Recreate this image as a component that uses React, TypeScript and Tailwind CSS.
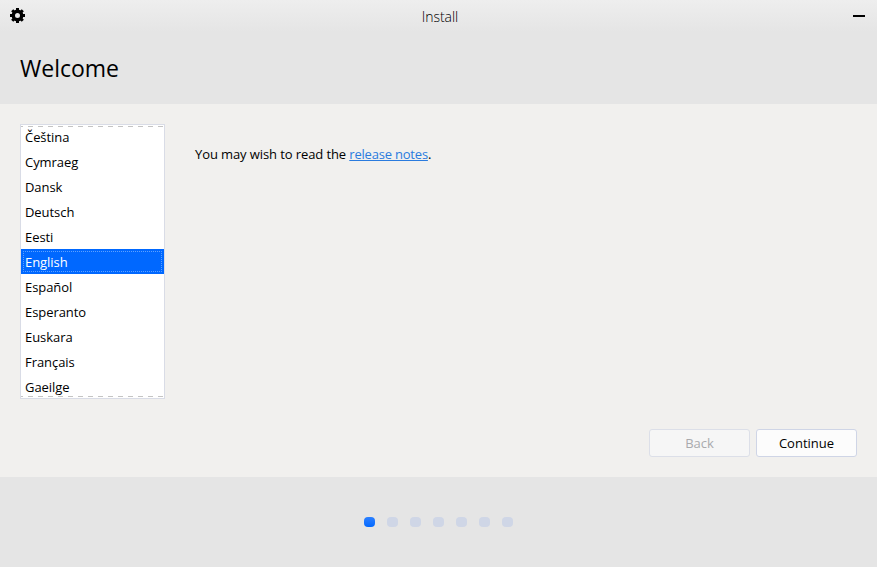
import React from "react";

const languages = ["Čeština", "Cymraeg", "Dansk", "Deutsch", "Eesti", "English", "Español", "Esperanto", "Euskara", "Français", "Gaeilge"];

function Language({ name, selected }: { name: string; selected: boolean }) {
  if (selected) {
    return (
      <li className="h-[25px] shrink-0 bg-[#0068ff] p-0.5 text-white">
        <span className="block h-[21px] rounded-[1px] border border-dotted border-[#5ea0ff] px-px leading-[21px]">{name}</span>
      </li>
    );
  }
  return <li className="h-[25px] shrink-0 px-1 leading-[27px]">{name}</li>;
}

export default function App() {
  return (
    <div className="flex h-[567px] w-[877px] flex-col overflow-hidden bg-[#f1f0ee] font-['Open_Sans',sans-serif] text-[13px] text-black">
      <header className="flex h-8 shrink-0 items-center justify-between bg-linear-to-b from-[#eeeeee] to-[#e5e5e5] pr-3 pl-[10px]">
        <svg className="mb-px" width="15" height="15" viewBox="0 0 15 15" fill="none" stroke="#000">
          <circle cx="7.5" cy="7.5" r="4.2" strokeWidth="3.4" />
          <path d="M7.5 0v3M7.5 12v3M0 7.5h3M12 7.5h3M2.2 2.2l2 2M10.8 10.8l2 2M2.2 12.8l2-2M10.8 4.2l2-2" strokeWidth="3" />
        </svg>
        <span className="pt-0.5 pl-0.5 text-sm leading-5 font-light tracking-[-0.05px]">Install</span>
        <span className="h-0.5 w-3 bg-black" />
      </header>
      <div className="flex h-[72px] shrink-0 items-center bg-[#e5e5e5] px-5">
        <h1 className="text-[23px] leading-8">Welcome</h1>
      </div>
      <main className="flex h-[373px] shrink-0 flex-col px-5 pt-5">
        <div className="flex h-[275px] gap-[30px]">
          <div className="relative w-[145px] overflow-hidden border border-[#d9dce6] bg-white">
            <ul className="-mt-px flex flex-col tracking-[-0.06px]">
              {languages.map((l) => <Language key={l} name={l} selected={l === "English"} />)}
            </ul>
            <span className="absolute inset-x-0 top-px h-px bg-[repeating-linear-gradient(90deg,#c4c4c4_0_2px,transparent_2px_7px,#c4c4c4_7px_10px)]" />
            <span className="absolute inset-x-0 bottom-px h-px bg-[repeating-linear-gradient(90deg,#c4c4c4_0_2px,transparent_2px_7px,#c4c4c4_7px_10px)]" />
          </div>
          <p className="pt-[21px] leading-[18px] tracking-[-0.1px]">You may wish to read the <a className="tracking-[-0.2px] text-[#2a7bde] underline">release notes</a>.</p>
        </div>
        <div className="mt-[30px] flex justify-end gap-1.5">
          <button className="h-7 w-[101px] rounded-[3px] border border-[#dcdfe8] bg-[#f6f6f6] pt-px text-[#a9aaad]">Back</button>
          <button className="h-7 w-[101px] rounded-[3px] border border-[#cfd5e6] bg-[#fcfcfc] pt-px">Continue</button>
        </div>
      </main>
      <footer className="flex grow items-center justify-center gap-3 bg-[#e5e5e5]">
        {[0, 1, 2, 3, 4, 5, 6].map((i) => (
          <span key={i} className={i === 0 ? "h-2.5 w-[11px] rounded bg-linear-to-b from-[#2a80ff] to-[#0068ff]" : "h-2.5 w-[11px] rounded bg-[#cfd6e6]"} />
        ))}
      </footer>
    </div>
  );
}
